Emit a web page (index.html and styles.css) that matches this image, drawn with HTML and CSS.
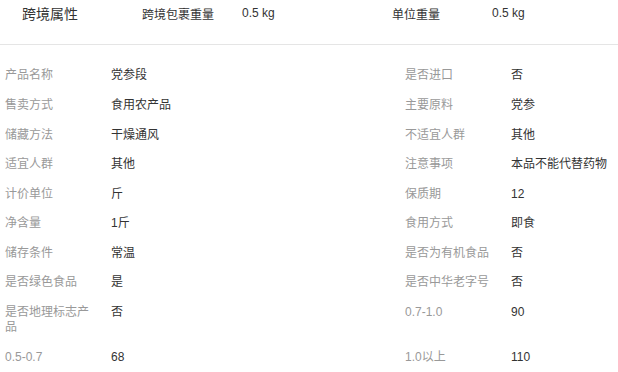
FILE: index.html
```html
<!DOCTYPE html>
<html lang="zh-CN">
<head>
<meta charset="utf-8">
<title>跨境属性</title>
<link rel="stylesheet" href="styles.css">
</head>
<body>
<div class="page">
  <div class="header">
    <div class="title">跨境属性</div>
    <div class="h-label">跨境包裹重量</div>
    <div class="h-value">0.5 kg</div>
    <div class="h-label">单位重量</div>
    <div class="h-value">0.5 kg</div>
  </div>
  <div class="attrs">
    <div class="item"><span class="label">产品名称</span><span class="value">党参段</span></div>
    <div class="item"><span class="label">是否进口</span><span class="value">否</span></div>
    <div class="item"><span class="label">售卖方式</span><span class="value">食用农产品</span></div>
    <div class="item"><span class="label">主要原料</span><span class="value">党参</span></div>
    <div class="item"><span class="label">储藏方法</span><span class="value">干燥通风</span></div>
    <div class="item"><span class="label">不适宜人群</span><span class="value">其他</span></div>
    <div class="item"><span class="label">适宜人群</span><span class="value">其他</span></div>
    <div class="item"><span class="label">注意事项</span><span class="value">本品不能代替药物</span></div>
    <div class="item"><span class="label">计价单位</span><span class="value">斤</span></div>
    <div class="item"><span class="label">保质期</span><span class="value">12</span></div>
    <div class="item"><span class="label">净含量</span><span class="value">1斤</span></div>
    <div class="item"><span class="label">食用方式</span><span class="value">即食</span></div>
    <div class="item"><span class="label">储存条件</span><span class="value">常温</span></div>
    <div class="item"><span class="label">是否为有机食品</span><span class="value">否</span></div>
    <div class="item"><span class="label">是否绿色食品</span><span class="value">是</span></div>
    <div class="item"><span class="label">是否中华老字号</span><span class="value">否</span></div>
    <div class="item"><span class="label">是否地理标志产品</span><span class="value">否</span></div>
    <div class="item"><span class="label">0.7-1.0</span><span class="value">90</span></div>
    <div class="item"><span class="label">0.5-0.7</span><span class="value">68</span></div>
    <div class="item"><span class="label">1.0以上</span><span class="value">110</span></div>
  </div>
</div>
</body>
</html>
```

FILE: styles.css
```css
html, body {
  margin: 0;
  padding: 0;
  background: #fff;
  overflow: hidden;
}

body {
  font-family: "Liberation Sans", "Noto Sans CJK SC", sans-serif;
  font-size: 12px;
  color: #333;
}

.page {
  width: 618px;
}

.header {
  display: flex;
  align-items: center;
  height: 26px;
  padding-bottom: 18px;
  border-bottom: 1px solid #e5e5e5;
  margin-bottom: 16px;
}

.title {
  width: 120px;
  flex: none;
  padding-left: 22px;
  font-size: 14px;
  color: #333;
}

.h-label {
  width: 100px;
  flex: none;
  color: #333;
}

.h-value {
  width: 150px;
  flex: none;
  color: #333;
}

.attrs {
  display: grid;
  grid-template-columns: 400px 1fr;
  align-items: start;
}

.item {
  display: flex;
  align-items: flex-start;
  padding: 7.4px 0 7.2px 5px;
  line-height: 15px;
}

.label {
  width: 90px;
  flex: none;
  margin-right: 16px;
  color: #999;
}

.value {
  color: #333;
}
```
